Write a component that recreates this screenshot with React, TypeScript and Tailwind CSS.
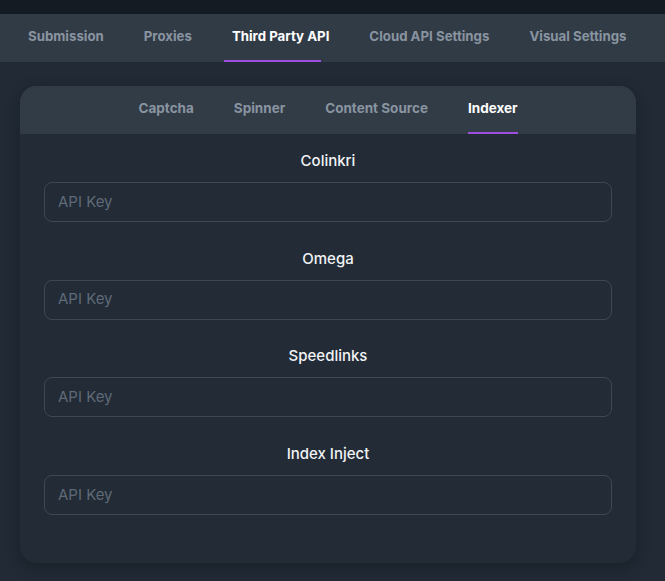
import React from "react";

const mainTabs = ["Submission", "Proxies", "Third Party API", "Cloud API Settings", "Visual Settings"];
const subTabs = ["Captcha", "Spinner", "Content Source", "Indexer"];
const fields = ["Colinkri", "Omega", "Speedlinks", "Index Inject"];

export default function App() {
  return (
    <div
      className="w-[665px] h-[581px] bg-[#212a35] overflow-hidden"
      style={{ fontFamily: "Inter, 'Noto Sans', sans-serif" }}
    >
      <div className="h-[14px] bg-[#151b22]" />
      <div className="h-12 bg-[#313b46] flex pl-2">
        {mainTabs.map((t) => {
          const active = t === "Third Party API";
          return (
            <div
              key={t}
              className={`relative h-12 px-5 flex items-center text-[13.25px] font-bold ${
                active ? "text-white" : "text-[#8994a1]"
              }`}
            >
              <span className="-mt-[3px]">{t}</span>
              {active && <span className="absolute bottom-0 left-3 right-7 h-[2px] bg-[#9d4edd]" />}
            </div>
          );
        })}
      </div>
      <div className="ml-5 mt-6 w-[616px] rounded-2xl bg-[#222b36] shadow-[0_4px_14px_rgba(0,0,0,0.25)] overflow-hidden">
        <div className="h-12 bg-[#323c47] flex justify-center">
          {subTabs.map((t) => {
            const active = t === "Indexer";
            return (
              <div
                key={t}
                className={`relative h-12 px-5 flex items-center text-[13.5px] font-bold ${
                  active ? "text-white" : "text-[#8994a1]"
                }`}
              >
                <span className="-mt-[3px]">{t}</span>
                {active && <span className="absolute bottom-0 left-5 right-5 h-[2px] bg-[#9d4edd]" />}
              </div>
            );
          })}
        </div>
        <div className="px-6 pt-4 pb-12 flex flex-col gap-[25.7px]">
          {fields.map((f) => (
            <div key={f} className="flex flex-col">
              <div className="text-center text-[15px] font-medium text-[#f1f3f5] leading-[22px] mb-2.5">{f}</div>
              <input
                placeholder="API Key"
                className="h-10 w-full rounded-lg border border-[#3d4853] bg-transparent px-[13px] pb-[2px] text-[15px] text-white placeholder:text-[#5f6a76] outline-none"
              />
            </div>
          ))}
        </div>
      </div>
    </div>
  );
}
